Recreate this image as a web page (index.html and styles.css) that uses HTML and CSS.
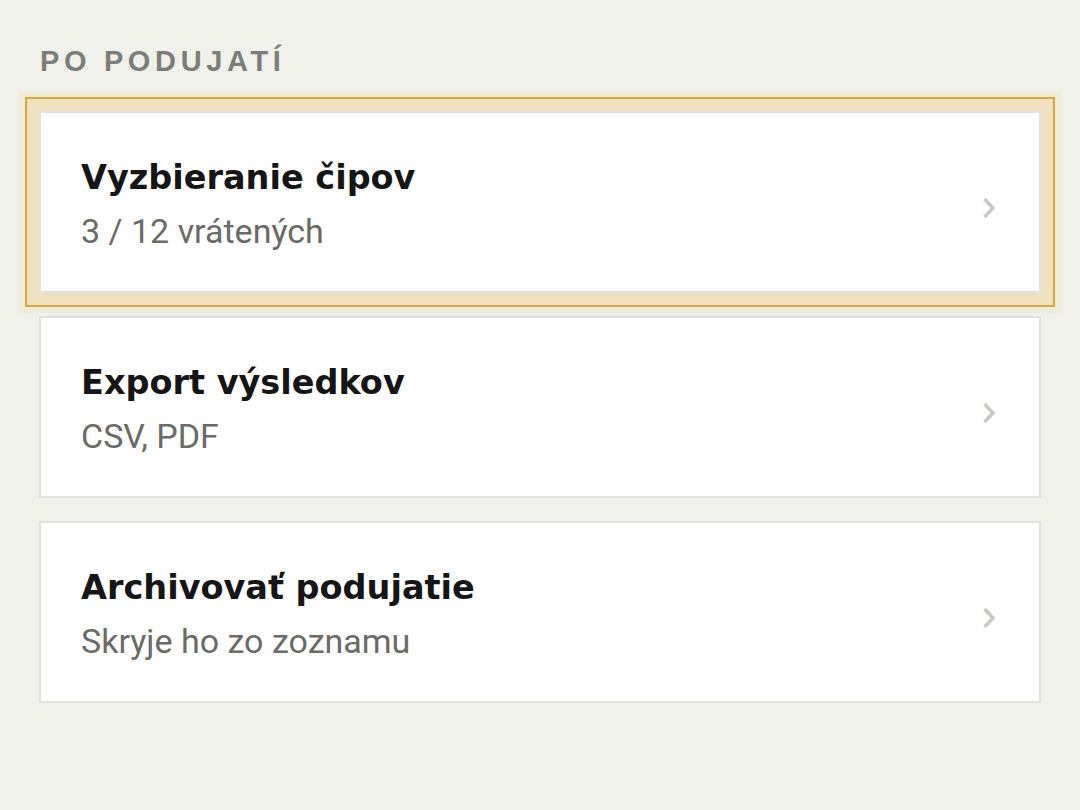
FILE: index.html
```html
<!DOCTYPE html>
<html lang="sk">
<head>
<meta charset="utf-8">
<title>Po podujatí</title>
<link rel="stylesheet" href="styles.css">
</head>
<body>
<main class="screen">
  <h2 class="section-label">PO PODUJATÍ</h2>
  <ul class="menu">
    <li class="item item--focused">
      <div class="item-text">
        <div class="item-title">Vyzbieranie čipov</div>
        <div class="item-sub">3 / 12 vrátených</div>
      </div>
      <svg class="chev" viewBox="0 0 14 22" width="14" height="22"><polyline points="2.5,2 11,11 2.5,20" /></svg>
    </li>
    <li class="item">
      <div class="item-text">
        <div class="item-title">Export výsledkov</div>
        <div class="item-sub">CSV, PDF</div>
      </div>
      <svg class="chev" viewBox="0 0 14 22" width="14" height="22"><polyline points="2.5,2 11,11 2.5,20" /></svg>
    </li>
    <li class="item">
      <div class="item-text">
        <div class="item-title">Archivovať podujatie</div>
        <div class="item-sub">Skryje ho zo zoznamu</div>
      </div>
      <svg class="chev" viewBox="0 0 14 22" width="14" height="22"><polyline points="2.5,2 11,11 2.5,20" /></svg>
    </li>
  </ul>
</main>
</body>
</html>
```
FILE: styles.css
```css
html, body {
  margin: 0;
  padding: 0;
  background: #f1f1ec;
  height: 100%;
}
.screen {
  padding: 43px 39px 0 39px;
}
.section-label {
  margin: 0 0 0 1px;
  font-family: "Liberation Sans", Arial, sans-serif;
  font-weight: 700;
  font-size: 29px;
  letter-spacing: 0.16em;
  line-height: 36px;
  color: #7b7e78;
}
.menu {
  list-style: none;
  margin: 32px 0 0 0;
  padding: 0;
  display: flex;
  flex-direction: column;
  gap: 23px;
}
.item {
  box-sizing: border-box;
  height: 182px;
  background: #ffffff;
  border: 2px solid #e2e2dd;
  display: flex;
  align-items: center;
  padding: 0 40px 0 40px;
}
.item--focused {
  outline: 2px solid #dba73a;
  outline-offset: 12px;
  box-shadow: 0 0 0 12px #efe1bf, 0 0 0 20px rgba(239, 225, 191, 0.35);
}
.item-text {
  flex: 1;
  display: flex;
  flex-direction: column;
  gap: 13px;
  padding-top: 5px;
}
.item-title {
  font-family: "DejaVu Sans", "Liberation Sans", sans-serif;
  font-weight: 700;
  font-size: 33.5px;
  line-height: 40px;
  color: #151515;
}
.item-sub {
  font-family: Roboto, "Liberation Sans", sans-serif;
  font-weight: 400;
  font-size: 34px;
  line-height: 40px;
  color: #6a6b67;
}
.chev {
  flex: none;
  margin-right: 3px;
  margin-top: 12px;
}
.chev polyline {
  fill: none;
  stroke: #c9c9c4;
  stroke-width: 3.5;
  stroke-linejoin: miter;
}
```
